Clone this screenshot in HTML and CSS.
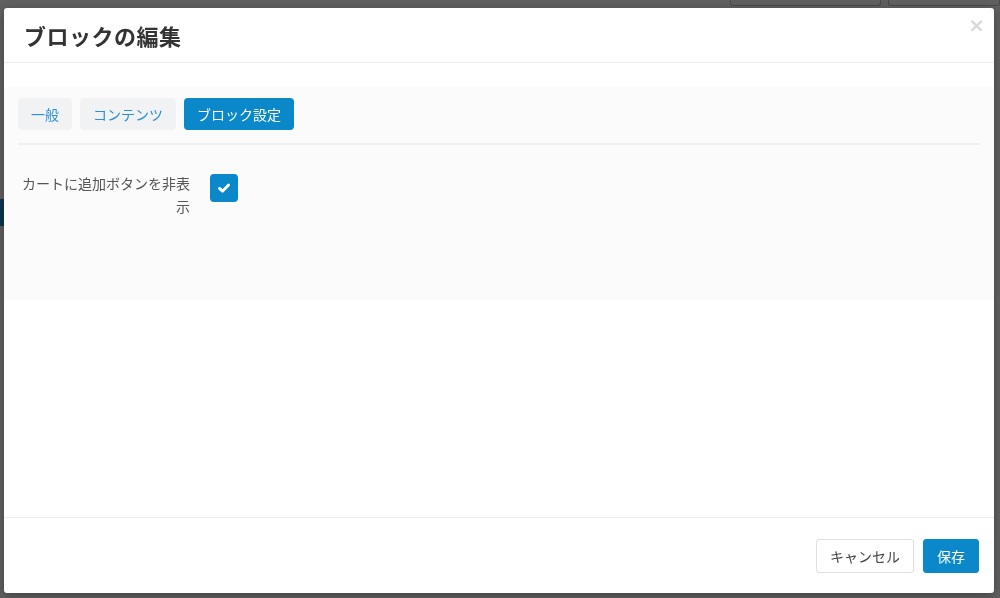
FILE: index.html
```html
<!DOCTYPE html>
<html lang="ja">
<head>
    <meta charset="UTF-8">
    <meta name="viewport" content="width=device-width, initial-scale=1.0">
    <title>ブロックの編集</title>
    <link rel="stylesheet" href="styles.css">
</head>
<body>
    <!-- page underneath the dialog -->
    <div class="page">
        <div class="page-top">
            <span class="page-box"></span>
            <span class="page-box wide"></span>
        </div>
        <div class="page-side"></div>
    </div>

    <div class="backdrop">
        <div class="modal">
            <div class="modal-header">
                <h2 class="modal-title">ブロックの編集</h2>
                <button class="close" aria-label="close">&times;</button>
            </div>

            <div class="modal-body">
                <div class="panel">
                    <div class="tabs">
                        <button class="tab">一般</button>
                        <button class="tab">コンテンツ</button>
                        <button class="tab active">ブロック設定</button>
                    </div>

                    <div class="form-row">
                        <label class="form-label" for="hide-cart">カートに追加ボタンを非表示</label>
                        <label class="check">
                            <input type="checkbox" id="hide-cart" checked>
                            <span class="check-box">
                                <svg viewBox="0 0 16 16" width="14" height="14">
                                    <path d="M2.8 8.4 L6.3 11.6 L13.2 4.6" fill="none" stroke="#fff" stroke-width="3.2" stroke-linecap="round" stroke-linejoin="round"/>
                                </svg>
                            </span>
                        </label>
                    </div>
                </div>
            </div>

            <div class="modal-footer">
                <button class="btn">キャンセル</button>
                <button class="btn primary">保存</button>
            </div>
        </div>
    </div>
</body>
</html>
```

FILE: styles.css
```css
body {
    margin: 0;
    height: 100vh;
    background: #606060;
    font-family: "Noto Sans CJK JP", "Noto Sans", sans-serif;
    overflow: hidden;
}

.page-top {
    display: flex;
    justify-content: flex-end;
    gap: 7px;
}
.page-box {
    width: 149px;
    height: 6px;
    border: 1px solid #4a4a4a;
    border-top: none;
    border-radius: 0 0 3px 3px;
    margin-top: -1px;
}
.page-box.wide { width: 110px; }
.page-side {
    width: 4px;
    height: 27px;
    margin-top: 193px;
    background: #10354f;
}

.backdrop {
    position: fixed;
    inset: 0;
    padding: 8px 6px 5px 4px;
}

.modal {
    height: 100%;
    background: #ffffff;
    border-radius: 3px;
    box-shadow: 0 3px 12px rgba(0, 0, 0, 0.3);
    display: flex;
    flex-direction: column;
}

.modal-header {
    height: 54px;
    border-bottom: 1px solid #eeeeee;
    display: flex;
    align-items: center;
    justify-content: space-between;
    padding: 0 9px 0 20px;
}
.modal-title {
    margin: 0;
    font-size: 22px;
    font-weight: bold;
    color: #333333;
    letter-spacing: 0.5px;
}
.close {
    align-self: flex-start;
    margin-top: 7px;
    border: none;
    background: none;
    color: #d9d9d9;
    font-size: 20px;
    font-weight: bold;
    line-height: 1;
    padding: 0;
    cursor: pointer;
    font-family: "DejaVu Sans", sans-serif;
}

.modal-body {
    flex: 1;
    padding-top: 24px;
}
.panel {
    background: #fbfbfc;
    height: 213px;
    box-sizing: border-box;
    padding: 11px 14px 0;
}

.tabs {
    display: flex;
    gap: 8px;
    padding-bottom: 13px;
    border-bottom: 2px solid #eef0f3;
}
.tab {
    height: 32px;
    padding: 0 13px;
    border: none;
    border-radius: 4px;
    background: #f1f2f3;
    color: #2c8fd4;
    font-family: inherit;
    font-size: 14px;
    cursor: pointer;
}
.tab.active {
    background: #0a88c9;
    color: #ffffff;
}

.form-row {
    display: flex;
    align-items: flex-start;
    gap: 20px;
    padding-top: 29px;
}
.form-label {
    width: 172px;
    text-align: right;
    font-size: 14px;
    line-height: 23px;
    color: #555555;
    margin-top: -2px;
}
.check input { display: none; }
.check-box {
    width: 28px;
    height: 28px;
    border-radius: 4px;
    background: #0a88c9;
    display: flex;
    align-items: center;
    justify-content: center;
    cursor: pointer;
}

.modal-footer {
    border-top: 1px solid #eeeeee;
    height: 76px;
    display: flex;
    justify-content: flex-end;
    align-items: flex-start;
    gap: 9px;
    padding: 21px 15px 0 0;
    box-sizing: border-box;
}
.btn {
    height: 34px;
    padding: 0 13px;
    border: 1px solid #dde0e4;
    border-radius: 3px;
    background: #ffffff;
    color: #444444;
    font-family: inherit;
    font-size: 14px;
    cursor: pointer;
}
.btn.primary {
    background: #0a88c9;
    border-color: #0a88c9;
    color: #ffffff;
}
```
